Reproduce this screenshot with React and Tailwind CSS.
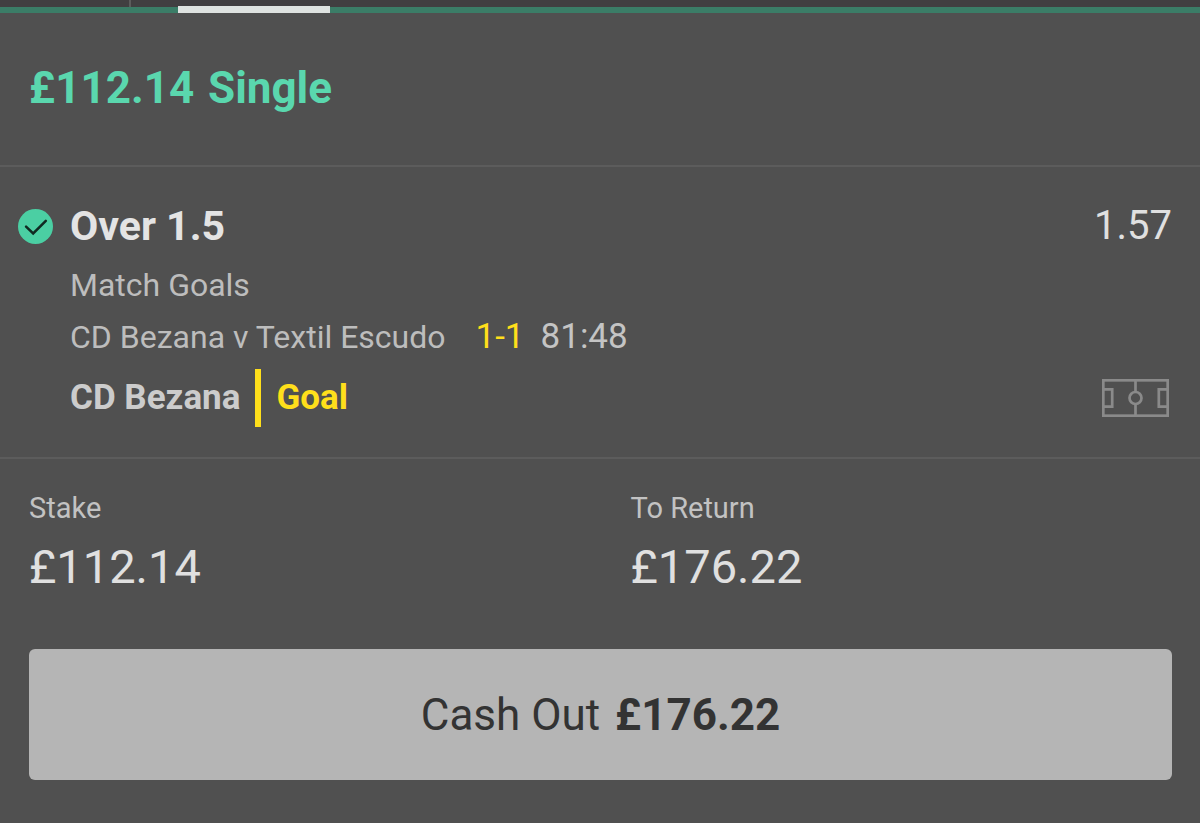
function TabStrip() {
  return (
    <div className="h-[13px] bg-linear-to-b from-[#413f41] from-[7px] to-[#3b7d67] to-[7px]">
      <nav aria-label="Bets" className="flex h-full">
        <span className="ml-[129px] h-[7px] w-[2px] bg-[#5c5c5c]" />
        <a
          href="#settled"
          aria-label="Settled"
          className="ml-[47px] mt-[6px] h-[7px] w-[152px] bg-[#dfe3e1]"
        />
      </nav>
    </div>
  );
}

function CheckIcon() {
  return (
    <svg viewBox="0 0 36 36" className="size-[35px] shrink-0" aria-hidden="true">
      <circle cx="18" cy="18" r="18" fill="#4bcfa3" />
      <path
        d="M8.3 18.2 L15.6 25.2 L28.6 12.3"
        fill="none"
        stroke="#102a22"
        strokeWidth="2.6"
        strokeLinecap="round"
      />
    </svg>
  );
}

function PitchIcon() {
  return (
    <svg
      viewBox="0 0 67 38"
      className="h-[38px] w-[67px]"
      fill="none"
      stroke="#8a8a8a"
      strokeWidth="2.7"
      aria-hidden="true"
    >
      <rect x="1.3" y="1.3" width="64.4" height="35.4" />
      <path d="M1.3 10.3 H10.2 V27.7 H1.3 M65.7 10.3 H56.8 V27.7 H65.7 M33.5 1.3 V12.6 M33.5 25.4 V36.7" />
      <circle cx="33.5" cy="19" r="6" />
    </svg>
  );
}

function Amount({ label, value }) {
  return (
    <div>
      <dt className="text-[29px] leading-10 text-[#c2c2c2]">{label}</dt>
      <dd className="mt-[11px] text-[47px] leading-14 text-[#e0e0e0]">{value}</dd>
    </div>
  );
}

export default function App() {
  return (
    <main className="min-h-screen bg-[#505050] font-['Roboto',sans-serif]">
      <TabStrip />
      <header className="border-b-2 border-[#5c5c5c] pt-[47px] pb-[49px] pl-[29px]">
        <h1 className="text-[44px] leading-14 font-bold text-[#5ad7ae]">
          £112.14 <span className="ml-[3px]">Single</span>
        </h1>
      </header>

      <section className="border-b-2 border-[#5c5c5c] pt-[35px] pr-[28px] pb-[30px] pl-[18px]">
        <div className="flex items-center">
          <CheckIcon />
          <h2 className="ml-[17px] text-[41px] leading-12 font-bold text-[#e4e4e4]">
            Over 1.5
          </h2>
          <span className="ml-auto text-[40px] leading-12 text-[#e0e0e0]">1.57</span>
        </div>
        <div className="mt-[9px] pl-[52px] text-[32px] leading-[52px] text-[#bdbdbd]">
          <p>Match Goals</p>
          <p className="flex">
            <span>CD Bezana v Textil Escudo</span>
            <span className="ml-[30px] text-[35px] text-[#ffdf1b]">1-1</span>
            <span className="ml-[16px] text-[35px] text-[#c4c4c4]">81:48</span>
          </p>
        </div>
        <div className="mt-[6px] flex items-center pl-[52px] text-[35px] leading-[58px] font-bold">
          <span className="text-[#cccccc]">CD Bezana</span>
          <span className="ml-[15px] border-l-6 border-[#ffdf1b] pl-[15px] text-[#ffdf1b]">
            Goal
          </span>
          <button type="button" aria-label="Match tracker" className="mr-[3px] ml-auto">
            <PitchIcon />
          </button>
        </div>
      </section>

      <section className="pt-[29px] pr-[28px] pb-[43px] pl-[29px]">
        <dl className="grid grid-cols-2 gap-x-[60px]">
          <Amount label="Stake" value="£112.14" />
          <Amount label="To Return" value="£176.22" />
        </dl>
        <button
          type="button"
          className="mt-[54px] w-full rounded-[6px] bg-[#b5b5b5] pt-[38px] pb-[36px] text-center text-[44px] leading-[57px] text-[#333333]"
        >
          Cash Out <strong className="ml-1 font-bold">£176.22</strong>
        </button>
      </section>
    </main>
  );
}
